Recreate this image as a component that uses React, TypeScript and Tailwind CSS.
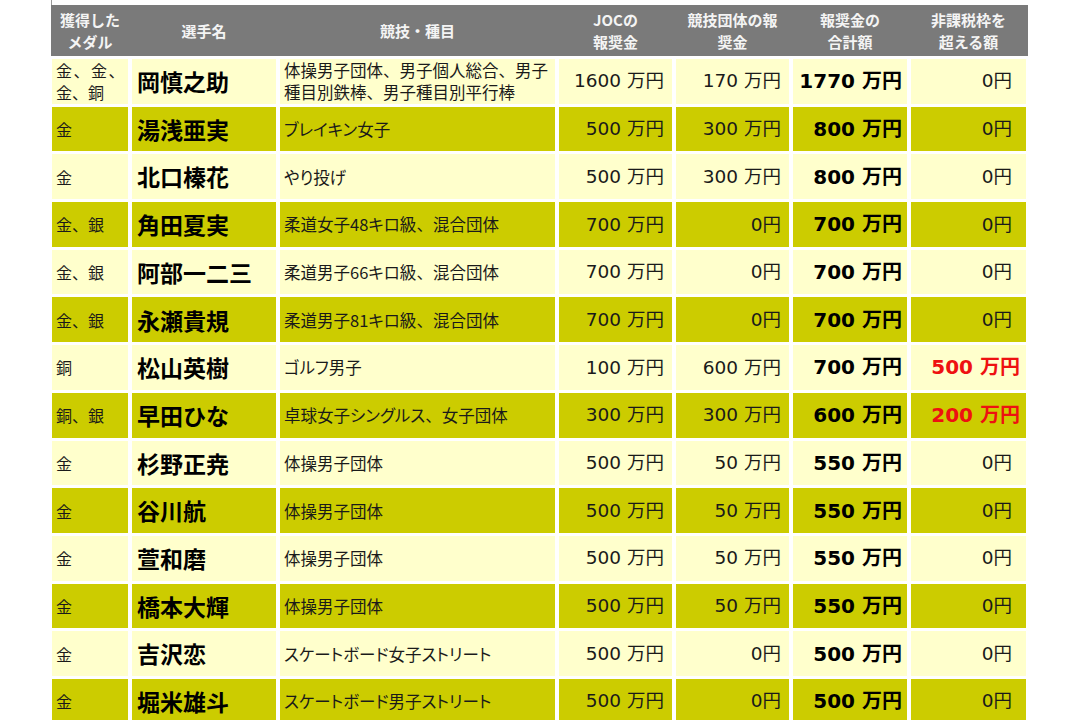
import React from "react";

type Row = {
  medal: React.ReactNode;
  name: string;
  event: string;
  joc: string;
  fed: string;
  total: string;
  over: string;
  red?: boolean;
};

const rows: Row[] = [
  {
    medal: (
      <>
        <span className="tracking-[1.5px]">金、金、</span>
        <br />
        金、銅
      </>
    ),
    name: "岡慎之助",
    event: "体操男子団体、男子個人総合、男子\n種目別鉄棒、男子種目別平行棒",
    joc: "1600 万円",
    fed: "170 万円",
    total: "1770 万円",
    over: "0円",
  },
  { medal: "金", name: "湯浅亜実", event: "ブレイキン女子", joc: "500 万円", fed: "300 万円", total: "800 万円", over: "0円" },
  { medal: "金", name: "北口榛花", event: "やり投げ", joc: "500 万円", fed: "300 万円", total: "800 万円", over: "0円" },
  { medal: "金、銀", name: "角田夏実", event: "柔道女子48キロ級、混合団体", joc: "700 万円", fed: "0円", total: "700 万円", over: "0円" },
  { medal: "金、銀", name: "阿部一二三", event: "柔道男子66キロ級、混合団体", joc: "700 万円", fed: "0円", total: "700 万円", over: "0円" },
  { medal: "金、銀", name: "永瀬貴規", event: "柔道男子81キロ級、混合団体", joc: "700 万円", fed: "0円", total: "700 万円", over: "0円" },
  { medal: "銅", name: "松山英樹", event: "ゴルフ男子", joc: "100 万円", fed: "600 万円", total: "700 万円", over: "500 万円", red: true },
  { medal: "銅、銀", name: "早田ひな", event: "卓球女子シングルス、女子団体", joc: "300 万円", fed: "300 万円", total: "600 万円", over: "200 万円", red: true },
  { medal: "金", name: "杉野正尭", event: "体操男子団体", joc: "500 万円", fed: "50 万円", total: "550 万円", over: "0円" },
  { medal: "金", name: "谷川航", event: "体操男子団体", joc: "500 万円", fed: "50 万円", total: "550 万円", over: "0円" },
  { medal: "金", name: "萱和磨", event: "体操男子団体", joc: "500 万円", fed: "50 万円", total: "550 万円", over: "0円" },
  { medal: "金", name: "橋本大輝", event: "体操男子団体", joc: "500 万円", fed: "50 万円", total: "550 万円", over: "0円" },
  { medal: "金", name: "吉沢恋", event: "スケートボード女子ストリート", joc: "500 万円", fed: "0円", total: "500 万円", over: "0円" },
  { medal: "金", name: "堀米雄斗", event: "スケートボード男子ストリート", joc: "500 万円", fed: "0円", total: "500 万円", over: "0円" },
];

function EventText({ text }: { text: string }) {
  const lines = text.split("\n");
  return (
    <div>
      {lines.map((line, li) => (
        <React.Fragment key={li}>
          {li > 0 && <br />}
          {line.split("、").map((part, pi) => (
            <React.Fragment key={pi}>
              {pi > 0 && <span className="[font-feature-settings:normal]">、</span>}
              {part}
            </React.Fragment>
          ))}
        </React.Fragment>
      ))}
    </div>
  );
}

const cols = "grid grid-cols-[76px_144px_275px_113px_113px_114px_115px] gap-x-[4px]";
const numFont = "font-['DejaVu_Sans','Noto_Sans_CJK_JP',sans-serif]";

export default function App() {
  return (
    <div className="w-[1080px] h-[720px] overflow-hidden bg-white font-['Noto_Sans_CJK_JP',sans-serif] text-[#1a1a1a]">
      <div className="ml-[51px] h-[5px] border-l border-[#9a9a9a]" />
      <div className="ml-[51px] w-[977px] h-[51px] bg-[#7a7a7a] pl-[1px]">
        <div className={`${cols} h-full items-center text-center text-[15px] font-bold leading-[22px] text-[#f4f4f4]`}>
          <div>
            獲得した
            <br />
            メダル
          </div>
          <div>選手名</div>
          <div>競技・種目</div>
          <div>
            JOCの
            <br />
            報奨金
          </div>
          <div>
            競技団体の報
            <br />
            奨金
          </div>
          <div>
            報奨金の
            <br />
            合計額
          </div>
          <div>
            非課税枠を
            <br />
            超える額
          </div>
        </div>
      </div>
      <div className={`${cols} ml-[52px] mt-[3px] gap-y-[3px] auto-rows-[44.7px]`}>
        {rows.map((r, i) => {
          const bg = i % 2 === 0 ? "bg-[#ffffcc]" : "bg-[#cccc00]";
          return (
            <React.Fragment key={i}>
              <div className={`${bg} flex items-center pl-[4px] text-[16px] leading-[22px]`}>
                <div>{r.medal}</div>
              </div>
              <div className={`${bg} flex items-center pl-[5px] text-[23px] font-bold text-black`}>
                {r.name}
              </div>
              <div className={`${bg} flex items-center pl-[4px] text-[16.5px] leading-[22px] [font-feature-settings:'palt']`}>
                <EventText text={r.event} />
              </div>
              <div className={`${bg} ${numFont} flex items-center justify-end pr-[8px] text-[18.5px]`}>
                {r.joc}
              </div>
              <div className={`${bg} ${numFont} flex items-center justify-end pr-[8px] text-[18.5px]`}>
                {r.fed}
              </div>
              <div className={`${bg} ${numFont} flex items-center justify-end pr-[5px] text-[20px] font-bold text-black`}>
                {r.total}
              </div>
              {r.red ? (
                <div className={`${bg} ${numFont} flex items-center justify-end pr-[6px] text-[20px] font-bold text-[#ee1111]`}>
                  {r.over}
                </div>
              ) : (
                <div className={`${bg} ${numFont} flex items-center justify-end pr-[14px] text-[18.5px]`}>
                  {r.over}
                </div>
              )}
            </React.Fragment>
          );
        })}
      </div>
    </div>
  );
}
